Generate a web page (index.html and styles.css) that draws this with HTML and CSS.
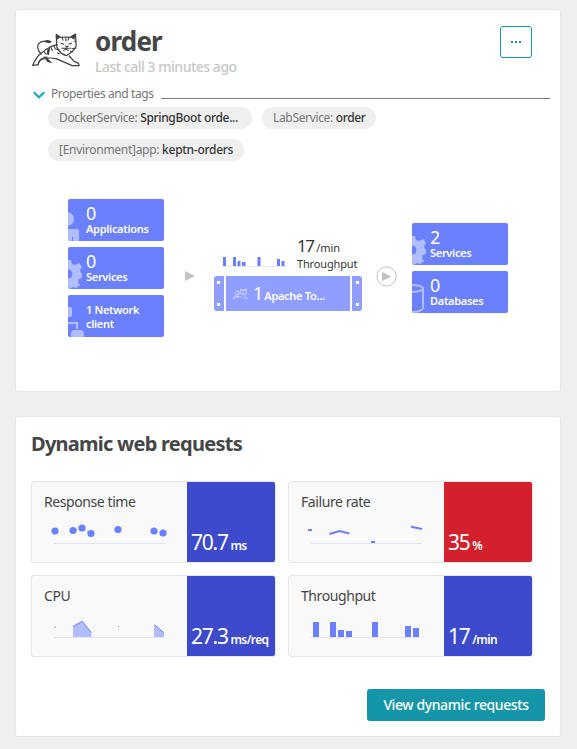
FILE: index.html
```html
<!DOCTYPE html>
<html lang="en">
<head>
<meta charset="utf-8">
<title>order</title>
<link rel="stylesheet" href="styles.css">
</head>
<body>
<svg width="0" height="0" class="defs">
  <symbol id="tomcat" viewBox="0 0 146 105">
    <g fill="none" stroke="currentColor" stroke-width="3.6" stroke-linejoin="round" stroke-linecap="round">
      <path d="M2 97 18 95Q20 78 38 77Q50 73 72 77L120 98L141 98L139 91L126 85L111 69"/>
      <path d="M2 97Q12 72 27 61Q43 47 55 41L75 35"/>
      <path d="M27 63Q13 48 18 34Q27 22 47 25"/>
      <path d="M72 4 84 13Q100 11 114 13L130 3L132 38Q128 54 102 68Q80 60 74 42Z"/>
      <path d="M18 95Q22 73 45 72"/>
    </g>
    <path fill="currentColor" d="M39 23Q49 18 59 26L52 31L38 28ZM73 4L75 20L84 13ZM130 3L114 13L127 20ZM34 69L45 75L61 91L46 87ZM46 47L54 45L50 67L44 63Z"/>
    <path fill="none" stroke="currentColor" stroke-width="3.2" d="M90 13l3 10M101 12v13M111 13l-4 10M86 31l10 3M109 34l10-4M88 46h28M99 38l5 4 5-4M93 53l8-5 9 5M69 48l13 2M118 47l15-2M56 42l5 12M65 39l5 10M35 56l8 9M75 59l7 3M125 25h7M122 57l-8-2"/>
  </symbol>
  <symbol id="gear" viewBox="0 0 28 30">
    <path fill="currentColor" fill-rule="evenodd" d="M12 1h5l1 4 3 1 4-2 3 4-2 3 1 3 1 1v4l-3 1-1 3 2 3-4 3-3-1-2 1-1 3h-5l-1-4-4-1-4-12 4-9 5-1ZM14 10.500a4.500 4.500 0 1 0 .1 9A4.500 4.500 0 0 0 14 10.500Z"/>
  </symbol>
</svg>

<section class="card overview">
  <header class="head">
    <svg class="cat" width="49" height="35"><use href="#tomcat"/></svg>
    <div class="titles">
      <h1>order</h1>
      <p>Last call 3 minutes ago</p>
    </div>
    <button class="more"><i></i><i></i><i></i></button>
  </header>

  <div class="props">
    <svg width="12" height="8" viewBox="0 0 12 8"><path d="M.7 1.200 6 6.200l5.300-5" fill="none" stroke="#14a8c4" stroke-width="2.200"/></svg>
    <span>Properties and tags</span><hr>
  </div>
  <div class="tags">
    <span class="tag w1">DockerService: <b>SpringBoot orde...</b></span>
    <span class="tag w2">LabService: <b>order</b></span>
    <span class="tag w3">[Environment]app: <b>keptn-orders</b></span>
  </div>

  <div class="flow">
    <div class="stack">
      <div class="node">
        <svg class="deco" width="12" height="42"><g fill="#b0bdff"><circle cx="-1" cy="20" r="7"/><path d="M0 30h9q2 0 2 2v10H0z"/></g><path d="M4.500 38v4" stroke="#6a80fe"/></svg>
        <strong>0</strong><span>Applications</span>
      </div>
      <div class="node">
        <svg class="deco" width="15" height="42"><use href="#gear" x="-14" y="12" width="28" height="30"/></svg>
        <strong>0</strong><span>Services</span>
      </div>
      <div class="node text-only">
        <svg class="deco" width="17" height="42"><path fill="#b0bdff" d="M0 12h2q2 0 2 2v6q0 2-2 2H0zM0 27h10v7H8v-5H0zM3 42v-3q0-4 4-4h5q4 0 4 4v3z"/></svg>
        <span>1 Network<br>client</span>
      </div>
    </div>
    <svg class="arrow" width="10" height="10"><path d="M0 0 10 5 0 10z" fill="#c3c3c3"/></svg>
    <div class="center">
      <div class="through">
        <svg width="64" height="12"><path d="M0 10.500h64" stroke="#dfe3fb"/><path fill="#6a80fe" d="M1 1h3v9H1zM11 1h3v9h-3zM15.500 5h3v5h-3zM20 6h3.500v4H20zM35.500 1h3v9h-3zM55 3h3v7h-3zM59.500 5h3v5h-3z"/></svg>
        <div class="rate"><div><strong>17</strong> /min</div><div class="lbl">Throughput</div></div>
      </div>
      <div class="host">
        <div class="rail"><i></i><i></i></div>
        <div class="body"><svg width="15" height="12" viewBox="0 0 146 105"><use href="#tomcat"/></svg><strong>1</strong><span>Apache To...</span></div>
        <div class="rail right"><i></i><i></i></div>
      </div>
    </div>
    <svg class="play" width="21" height="21"><circle cx="10.500" cy="10.500" r="9.600" fill="#fff" stroke="#c3c3c3"/><path d="M6 6l9.500 4.500L6 15z" fill="#c3c3c3"/></svg>
    <div class="stack">
      <div class="node">
        <svg class="deco" width="15" height="42"><use href="#gear" x="-14" y="12" width="28" height="30"/></svg>
        <strong>2</strong><span>Services</span>
      </div>
      <div class="node">
        <svg class="deco" width="14" height="42"><g fill="none" stroke="#b0bdff" stroke-width="2"><ellipse cx="-1" cy="17.500" rx="12" ry="3.500"/><path d="M11 18v19q-1 4-12 4"/></g></svg>
        <strong>0</strong><span>Databases</span>
      </div>
    </div>
  </div>
</section>

<section class="card requests">
  <h2>Dynamic web requests</h2>
  <div class="grid">
    <div class="metric">
      <div class="info">Response time
        <svg width="155" height="51"><path d="M22 32.500h111" stroke="#dfe3fb"/><path d="M41 19.300 50 17l9 5.300" fill="none" stroke="#6a80fe" stroke-dasharray="1 2"/><g fill="#6a80fe"><circle cx="23" cy="20" r="3.600"/><circle cx="41" cy="19.500" r="3.600"/><circle cx="50" cy="17" r="3.600"/><circle cx="59" cy="22.500" r="3.600"/><circle cx="86" cy="18.500" r="3.600"/><circle cx="122" cy="20" r="3.600"/><circle cx="131" cy="22" r="3.600"/></g></svg>
      </div>
      <div class="value"><strong>70.7</strong> ms</div>
    </div>
    <div class="metric">
      <div class="info">Failure rate
        <svg width="155" height="51"><path d="M22 32.500h111" stroke="#dfe3fb"/><path d="M19 19h4M40.500 23l10-3 10 2.500M122 15.800l11 2.200M82 31h4" fill="none" stroke="#6a80fe" stroke-width="2"/></svg>
      </div>
      <div class="value bad"><strong>35</strong> %</div>
    </div>
    <div class="metric">
      <div class="info">CPU
        <svg width="155" height="51"><path fill="#b0bdff" d="M41 21.300 50.300 16.300 59.300 27.700V32H41zM122 19.700l10 8V32h-10z"/><path d="M22 32.500h111" stroke="#dfe3fb"/><path d="M41 21.300 50.300 16.300 59.300 27.700M122.300 19.700l9.700 8" fill="none" stroke="#6a80fe"/><path fill="#6a80fe" d="M86 21h1v1h-1z"/><path fill="#9aaaff" d="M22.500 21.500h1.500v1.500h-1.500z"/></svg>
      </div>
      <div class="value"><strong>27.3</strong> ms/req</div>
    </div>
    <div class="metric">
      <div class="info">Throughput
        <svg width="155" height="51"><path d="M22 32.500h111" stroke="#dfe3fb"/><path fill="#6a80fe" d="M24 17h6v15h-6zM41 17h6v15h-6zM49 25h6v7h-6zM57 26h6v6h-6zM83 17h6v15h-6zM116 21h6v11h-6zM124 23h6v9h-6z"/></svg>
      </div>
      <div class="value"><strong>17</strong> /min</div>
    </div>
  </div>
  <button class="view">View dynamic requests</button>
</section>
</body>
</html>
```
FILE: styles.css
```css
* { box-sizing: border-box; }
body {
  margin: 0;
  padding: 9px 16px 0 15px;
  height: 749px;
  overflow: hidden;
  background: #efefef;
  color: #454646;
  font-family: "Noto Sans", sans-serif;
}
h1, h2, p { margin: 0; }
svg { display: block; flex: none; }
.defs { position: absolute; }
.card {
  background: #fff;
  border: 1px solid #e6e6e6;
  border-radius: 3px;
}
.overview { height: 383px; padding: 15px 10px 0 16px; }
.requests { height: 321px; margin-top: 24px; padding: 0 15px; display: flex; flex-direction: column; }

.head { display: flex; height: 61px; }
.cat { margin-top: 8px; color: #3e3e3e; }
.titles { margin-left: 14px; flex: 1; }
h1 { font-size: 26px; line-height: 32px; letter-spacing: -.8px; }
.titles p { font-size: 14px; font-weight: 500; line-height: 19px; letter-spacing: -.48px; color: #c7c7c7; }
.more {
  width: 32px; height: 32px; margin: 1px 18px 0 0; padding: 0;
  display: flex; align-items: center; justify-content: center; gap: 2px;
  background: #fff; border: 1px solid #1496a8; border-radius: 3px;
}
.more i { width: 2px; height: 2px; background: #1496a8; }

.props {
  display: flex; align-items: center; height: 16px; margin-left: 1px;
  font-size: 12px; line-height: 16px; letter-spacing: -.4px; color: #767676;
}
.props span { margin-left: 6px; white-space: nowrap; }
.props hr { flex: 1; margin: 9px 0 0 7px; border: 0; height: 1px; background: #7c7c7c; }
.props svg { margin-top: 1px; }

.tags { display: flex; flex-wrap: wrap; gap: 10px; margin: 5px 0 0 16px; }
.tag {
  height: 22px; padding-left: 11px; border-radius: 11px; background: #efefef;
  font-size: 12px; line-height: 21px; letter-spacing: -.34px; color: #767676; white-space: nowrap;
}
.tag b { font-weight: 500; color: #363636; }
.w1 { width: 204px; }
.w2 { width: 114px; }
.w3 { width: 196px; letter-spacing: -.28px; }

.flow { display: flex; align-items: center; margin: 38px 0 0 36px; height: 138px; }
.stack { display: flex; flex-direction: column; gap: 6px; width: 96px; }
.node {
  position: relative; height: 42px; padding: 5px 0 0 18px; overflow: hidden;
  background: #6a80fe; border-radius: 2px; color: #fff;
}
.deco { position: absolute; left: 0; top: 0; color: #b0bdff; }
.node strong { display: block; font-size: 18px; font-weight: 400; line-height: 19px; }
.node span { display: block; font-size: 11px; font-weight: 600; line-height: 13px; letter-spacing: -.3px; }
.node strong + span { margin-top: -1px; }
.text-only { padding-top: 8px; }
.text-only span { line-height: 14px; }
.arrow { margin: 16px 19px 0 21px; }
.play { margin: 16px 15px 0 14px; }
.center { width: 148px; height: 138px; padding-top: 37px; }
.through { display: flex; height: 40px; padding-left: 8px; }
.through svg { margin-top: 20px; }
.rate { margin-left: 11px; font-size: 11px; line-height: 20px; letter-spacing: -.1px; white-space: nowrap; color: #363636; }
.rate strong { font-size: 17px; font-weight: 400; line-height: 20px; letter-spacing: -1.5px; }
.rate .lbl { font-size: 11px; line-height: 15px; letter-spacing: -.15px; margin-top: -2px; }
.host { display: flex; gap: 2px; height: 35px; }
.rail {
  width: 10px; padding: 5px 0 5px 3px; display: flex; flex-direction: column; justify-content: space-between;
  background: #8f9eff; border-radius: 3px 0 0 3px;
}
.rail i { width: 3px; height: 3px; background: #fff; }
.right { border-radius: 0 3px 3px 0; padding-left: 4px; }
.body {
  flex: 1; display: flex; align-items: baseline; padding-left: 7px;
  background: #8f9eff; color: #fff; white-space: nowrap; line-height: 34px;
}
.body strong { font-size: 18px; font-weight: 400; margin: 0 1px 0 5px; }
.body span { font-size: 11px; font-weight: 600; letter-spacing: -.3px; }

h2 { margin-top: 13px; font-size: 20px; line-height: 27px; letter-spacing: -.74px; }
.grid { display: grid; grid-template-columns: 245px 245px; grid-auto-rows: 82px; gap: 12px; margin-top: 24px; }
.metric { display: flex; border: 1px solid #e6e6e6; border-radius: 3px; overflow: hidden; background: #f9f9f9; }
.info { width: 155px; padding: 11px 0 0 12px; font-size: 14px; line-height: 18px; letter-spacing: -.42px; }
.info svg { margin-left: -12px; }
.value {
  flex: 1; padding: 46px 0 0 4px; background: #3c4acb; color: #fff; white-space: nowrap;
  font-size: 12px; font-weight: 600; line-height: 28px; letter-spacing: -.6px;
}
.value strong { font-size: 21px; font-weight: 400; line-height: 28px; letter-spacing: -1.2px; }
.bad { background: #d41f2c; }
.view {
  align-self: flex-end; width: 178px; height: 32px; margin-top: 32px; padding: 0;
  border: 0; border-radius: 3px; background: #1496a8; color: #fff;
  font: 500 14px/32px "Noto Sans", sans-serif; letter-spacing: -.4px;
}
```
